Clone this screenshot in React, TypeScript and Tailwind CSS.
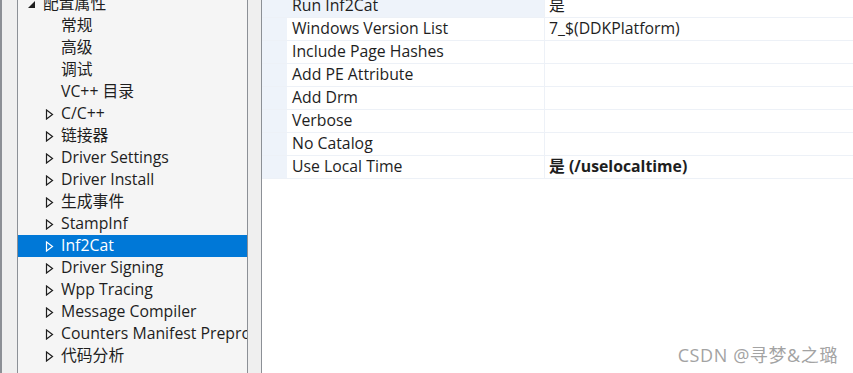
import React from "react"

const font = { fontFamily: '"Open Sans", "Noto Sans CJK SC", sans-serif' }

type Node = { label: string; level: 0 | 1 | 2; kind: "open" | "closed" | "leaf"; selected?: boolean }

const tree: Node[] = [
  { label: "配置属性", level: 0, kind: "open" },
  { label: "常规", level: 1, kind: "leaf" },
  { label: "高级", level: 1, kind: "leaf" },
  { label: "调试", level: 1, kind: "leaf" },
  { label: "VC++ 目录", level: 1, kind: "leaf" },
  { label: "C/C++", level: 1, kind: "closed" },
  { label: "链接器", level: 1, kind: "closed" },
  { label: "Driver Settings", level: 1, kind: "closed" },
  { label: "Driver Install", level: 1, kind: "closed" },
  { label: "生成事件", level: 1, kind: "closed" },
  { label: "StampInf", level: 1, kind: "closed" },
  { label: "Inf2Cat", level: 1, kind: "closed", selected: true },
  { label: "Driver Signing", level: 1, kind: "closed" },
  { label: "Wpp Tracing", level: 1, kind: "closed" },
  { label: "Message Compiler", level: 1, kind: "closed" },
  { label: "Counters Manifest Preprocessor", level: 1, kind: "closed" },
  { label: "代码分析", level: 1, kind: "closed" },
]

const props: { name: string; value: string; bold?: boolean }[] = [
  { name: "Run Inf2Cat", value: "是" },
  { name: "Windows Version List", value: "7_$(DDKPlatform)" },
  { name: "Include Page Hashes", value: "" },
  { name: "Add PE Attribute", value: "" },
  { name: "Add Drm", value: "" },
  { name: "Verbose", value: "" },
  { name: "No Catalog", value: "" },
  { name: "Use Local Time", value: "是 (/uselocaltime)", bold: true },
]

function Arrow({ kind, selected }: { kind: Node["kind"]; selected?: boolean }) {
  if (kind === "leaf") return <span className="w-[9px]" />
  if (kind === "open")
    return (
      <svg width="9" height="9" viewBox="0 0 9 9">
        <path d="M8 1 L8 8 L1 8 Z" fill="#1e1e1e" />
      </svg>
    )
  return (
    <svg width="9" height="11" viewBox="0 0 9 11">
      <path d="M1.5 1 L7.5 5.5 L1.5 10 Z" fill="none" stroke={selected ? "#ffffff" : "#1e1e1e"} strokeWidth="1.2" />
    </svg>
  )
}

export default function App() {
  return (
    <div className="w-[853px] h-[373px] overflow-hidden bg-white flex text-[15.8px] text-[#1e1e1e]" style={font}>
      {/* left strip */}
      <div className="w-[17px] shrink-0 bg-[#efefef] border-l-2 border-[#8c8f95]" />
      <div className="w-px shrink-0 bg-[#8c9096]" />
      {/* tree */}
      <div className="w-[229px] shrink-0 bg-[#f5f5f5] overflow-hidden">
        <div className="mt-[-7px]">
          {tree.map((n, i) => (
            <div
              key={i}
              className={`h-[22px] flex items-center whitespace-nowrap ${n.selected ? "bg-[#0078d7] text-white" : ""}`}
            >
              <div className={`flex items-center ${n.level === 0 ? "pl-[9px]" : "pl-[27px]"}`}>
                {n.kind === "leaf" ? <span className="w-[9px]" /> : <Arrow kind={n.kind} selected={n.selected} />}
                <span className="ml-[7px]">{n.label}</span>
              </div>
            </div>
          ))}
        </div>
      </div>
      <div className="w-px shrink-0 bg-[#8c9096]" />
      <div className="w-[13px] shrink-0 bg-[#efefef]" />
      <div className="w-px shrink-0 bg-[#8c9096]" />
      {/* property grid */}
      <div className="flex-1 overflow-hidden">
        <div className="mt-[-5px]">
          {props.map((p, i) => (
            <div key={i} className="h-[23px] flex border-b border-[#edf1f7]">
              <div className="w-[25px] shrink-0 bg-[#eef3fa]" />
              <div className={`w-[258px] shrink-0 pl-[5px] flex items-center border-r border-[#edf1f7] ${i === 0 ? "bg-[#eef3fa]" : "bg-white"}`}>
                {p.name}
              </div>
              <div className={`flex-1 pl-[4px] flex items-center ${p.bold ? "font-bold" : ""}`}>{p.value}</div>
            </div>
          ))}
        </div>
        <div className="flex justify-end pr-[15px] mt-[163px] text-[18px] tracking-[0.6px] text-[#a3a3a3]">CSDN @寻梦&amp;之璐</div>
      </div>
    </div>
  )
}
